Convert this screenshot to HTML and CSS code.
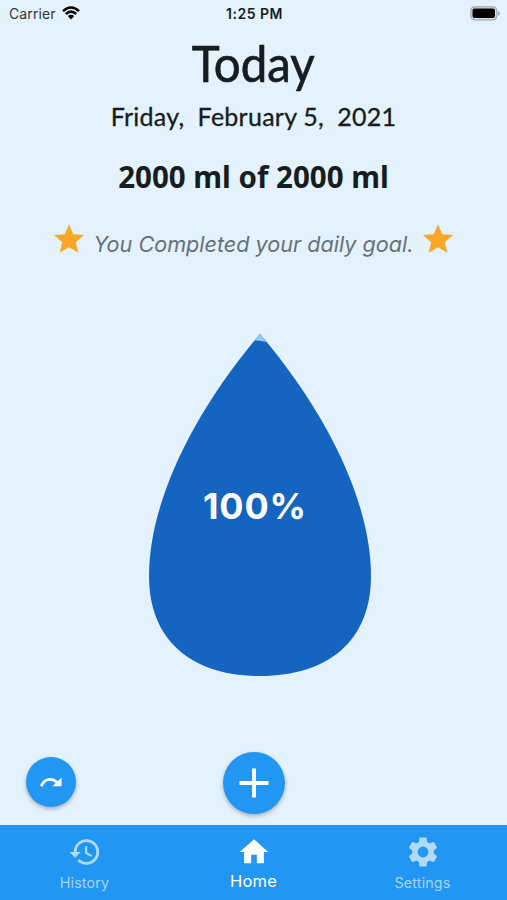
FILE: index.html
```html
<!DOCTYPE html>
<html lang="en">
<head>
<meta charset="utf-8">
<title>Today</title>
<link rel="stylesheet" href="styles.css">
</head>
<body>
<div class="app">
  <header class="status">
    <div class="carrier"><span>Carrier</span>
      <svg class="wifi" viewBox="0 0 18 14"><path d="M1 5.2Q9-2.2 17 5.2M3.8 8Q9 3.2 14.2 8" fill="none" stroke="#000" stroke-width="2.5"/><path d="M5.8 10Q9 7.500 12.2 10L9 13.4Z"/></svg>
    </div>
    <span class="clock">1:25 PM</span>
    <svg class="battery" viewBox="0 0 30 15"><rect x=".8" y=".8" width="26" height="13" rx="4" fill="#d5e0e7" stroke="#9fa9b0" stroke-width="1.2"/><rect x="2.5" y="2.5" width="22.5" height="9.5" rx="2"/><path d="M28 5v5q2-1 2-2.500T28 5Z" fill="#9fa9b0"/></svg>
  </header>
  <main class="main">
    <h1 class="title"><span>Today</span></h1>
    <p class="date"><span>Friday,&nbsp; February 5,&nbsp; 2021</span></p>
    <p class="amount">2000 ml of 2000 ml</p>
    <div class="goal">
      <svg class="star" viewBox="2 2 20 19"><path d="M12 17.270 18.180 21l-1.640-7.030L22 9.240l-7.190-.61L12 2 9.190 8.630 2 9.240l5.460 4.730L5.820 21z"/></svg>
      <span>You Completed your daily goal.</span>
      <svg class="star" viewBox="2 2 20 19"><path d="M12 17.270 18.180 21l-1.640-7.030L22 9.240l-7.190-.61L12 2 9.190 8.630 2 9.240l5.460 4.730L5.820 21z"/></svg>
    </div>
    <div class="drop">
      <svg viewBox="149 334 222 342"><path d="M260 334C187 420 149 508 149 576C149 641 192 676 260 676S371 641 371 576C371 508 333 420 260 334Z" fill="#1565c0"/><path d="M260 334L254.500 340.500Q260 340 266.500 342Z" fill="#90caf9"/></svg>
      <span class="percent">100%</span>
    </div>
    <div class="actions">
      <button class="fab small" aria-label="Redo"><svg viewBox="0 0 22 10"><path d="M1.300 9.300C4 1.300 12 .5 17 5.200" fill="none" stroke="#fff" stroke-width="2.700"/><path d="M21.500 .5v8.800h-9Z" fill="#fff"/></svg></button>
      <button class="fab large" aria-label="Add"><svg viewBox="0 0 30 30"><path d="M15 0.500v29M.5 15h29" stroke="#fff" stroke-width="4"/></svg></button>
    </div>
  </main>
  <nav class="nav">
    <a class="tab"><svg viewBox="0 0 24 24"><path d="M13 3a9 9 0 0 0-9 9H1l3.890 3.890.07.14L9 12H6c0-3.870 3.130-7 7-7s7 3.130 7 7-3.130 7-7 7c-1.930 0-3.680-.79-4.940-2.060l-1.420 1.420A8.954 8.954 0 0 0 13 21a9 9 0 0 0 0-18zm-1 5v5l4.280 2.540.72-1.210-3.500-2.080V8z"/></svg><span>History</span></a>
    <a class="tab active"><svg viewBox="0 0 24 24"><path d="M10 20v-6h4v6h5v-8h3L12 3 2 12h3v8z"/></svg><span>Home</span></a>
    <a class="tab gear"><svg viewBox="0 0 24 24"><path d="M19.140 12.940c.04-.3.06-.61.06-.94 0-.32-.02-.64-.07-.94l2.030-1.580a.49.49 0 0 0 .12-.61l-1.920-3.320a.488.488 0 0 0-.59-.22l-2.390.96c-.5-.38-1.030-.7-1.620-.94l-.36-2.540a.484.484 0 0 0-.48-.41h-3.840c-.24 0-.43.17-.47.41l-.36 2.540c-.59.24-1.130.57-1.620.94l-2.390-.96c-.22-.08-.47 0-.59.22L2.740 8.870c-.12.21-.08.47.12.61l2.030 1.580c-.05.3-.09.63-.09.94s.02.64.07.94l-2.030 1.580a.49.49 0 0 0-.12.61l1.920 3.320c.12.22.37.29.59.22l2.390-.96c.5.38 1.030.7 1.620.94l.36 2.540c.05.24.24.41.48.41h3.840c.24 0 .44-.17.47-.41l.36-2.540c.59-.24 1.130-.56 1.620-.94l2.390.96c.22.08.47 0 .59-.22l1.920-3.320c.12-.22.07-.47-.12-.61zM12 15.600A3.600 3.600 0 1 1 12 8.400a3.600 3.600 0 0 1 0 7.200z"/></svg><span>Settings</span></a>
  </nav>
</div>
</body>
</html>
```
FILE: styles.css
```css
* { box-sizing: border-box; }
body { margin: 0; background: #e3f2fd; color: #161c20; font-family: Inter, sans-serif; }
h1, p { margin: 0; font-weight: 400; }
svg { display: block; }
.app { width: 507px; height: 900px; display: flex; flex-direction: column; overflow: hidden; }
.status { height: 27px; padding: 0 7px 0 9px; display: grid; grid-template-columns: 1fr auto 1fr; align-items: center; font-size: 14px; }
.carrier { display: flex; align-items: center; gap: 6px; color: #30373b; letter-spacing: .1px; }
.wifi { width: 18px; height: 14px; margin-top: -1px; }
.clock { font-weight: 600; font-size: 14px; letter-spacing: .5px; }
.battery { width: 30px; height: 15px; justify-self: end; margin-top: -1px; }
.main { flex: 1; display: flex; flex-direction: column; align-items: center; }
.title { height: 72px; font: 400 51px/72px Lato, sans-serif; -webkit-text-stroke: .7px; }
.title span { display: inline-block; transform: scaleX(.93); }
.date { height: 32px; font: 400 25px/34px Lato, sans-serif; letter-spacing: .25px; white-space: nowrap; -webkit-text-stroke: .3px; }
.date span { display: inline-block; }
.amount { margin-top: 26px; height: 40px; font: 700 29.500px/40px "Noto Sans", sans-serif; white-space: nowrap; }
.goal { margin-top: 25px; height: 34px; display: flex; justify-content: center; gap: 10px; font-size: 21.600px; line-height: 44px; font-style: italic; color: #667079; white-space: nowrap; }
.star { width: 30px; height: 29px; fill: #f9a825; margin-top: 2px; }
.drop { width: 222px; height: 342px; margin: 78px 0 0 13px; display: grid; }
.drop svg, .percent { grid-area: 1 / 1; }
.drop svg { width: 222px; height: 342px; }
.percent { color: #fff; font-size: 36px; line-height: 44px; font-weight: 700; letter-spacing: .8px; margin: 150px 0 0 54px; z-index: 1; white-space: nowrap; }
.actions { width: 507px; margin-top: 76px; padding-left: 26px; display: grid; grid-template-columns: 197px 62px; align-items: center; }
.fab { border: 0; padding: 0; border-radius: 50%; background: #2196f3; display: grid; place-items: center; box-shadow: 0 2px 4px rgba(0, 0, 0, .28); }
.small { width: 50px; height: 50px; margin-top: -3px; }
.small svg { width: 22px; height: 10px; }
.large { width: 62px; height: 62px; }
.large svg { width: 30px; height: 30px; }
.nav { height: 75px; background: #2196f3; display: grid; grid-template-columns: repeat(3, 1fr); }
.tab { display: flex; flex-direction: column; align-items: center; padding-top: 10px; color: #a6d5fa; fill: #b0dafb; font-size: 14.300px; line-height: 20px; letter-spacing: .15px; }
.tab svg { width: 34px; height: 34px; }
.gear svg { width: 36px; height: 36px; margin: -1px 0; }
.tab span { margin-top: 4px; }
.active { color: #fff; fill: #fff; font-size: 16.500px; }
.active span { margin-top: 2px; }
```
